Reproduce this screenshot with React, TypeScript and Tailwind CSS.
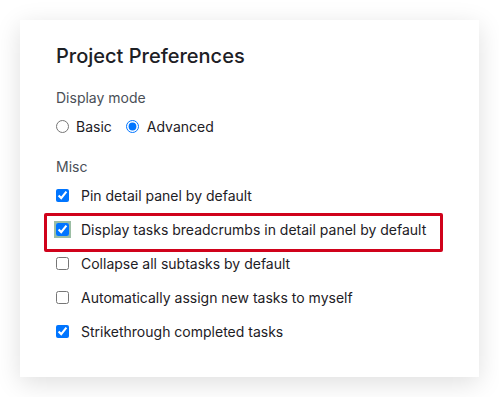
import React from "react";

const items = [
  { label: "Pin detail panel by default", checked: true },
  { label: "Display tasks breadcrumbs in detail panel by default", checked: true, highlight: true },
  { label: "Collapse all subtasks by default", checked: false },
  { label: "Automatically assign new tasks to myself", checked: false },
  { label: "Strikethrough completed tasks", checked: true },
];

export default function App() {
  return (
    <div className="w-[499px] h-[397px] bg-white pt-[20px] pl-[20px]" style={{ fontFamily: "Inter, 'Noto Sans', sans-serif" }}>
      <div className="w-[459px] h-[357px] bg-white shadow-[0_6px_24px_rgba(0,0,0,0.13)] pl-[36px] pt-[22px]">
        <h1 className="text-[20px] leading-[28px] font-medium text-[#1d2025]">Project Preferences</h1>
        <div className="mt-[18px] text-[14px] leading-[20px] text-[#4a4f57]">Display mode</div>
        <div className="mt-[8px] flex items-center h-[20px] text-[14px] text-[#1d2025]">
          <input type="radio" name="mode" className="m-0 w-[13px] h-[13px]" />
          <span className="ml-[7px]">Basic</span>
          <input type="radio" name="mode" defaultChecked className="m-0 ml-[14px] w-[13px] h-[13px]" />
          <span className="ml-[8px]">Advanced</span>
        </div>
        <div className="mt-[21px] text-[14px] leading-[20px] text-[#4a4f57]">Misc</div>
        <div className="mt-[8px] flex flex-col gap-[14px]">
          {items.map((it) =>
            it.highlight ? (
              <div key={it.label} className="relative flex items-center h-[20px] text-[14px] text-[#1d2025]">
                <div className="absolute left-[-12px] top-[-6px] w-[399px] h-[39px] border-[3px] border-[#d0021b] rounded-[2px]" />
                <span className="flex items-center justify-center w-[17px] h-[17px] -ml-[2px] -mr-[2px] bg-[#9cbea4]">
                  <input type="checkbox" defaultChecked={it.checked} className="m-0 w-[13px] h-[13px]" />
                </span>
                <span className="ml-[12px]">{it.label}</span>
              </div>
            ) : (
              <div key={it.label} className="flex items-center h-[20px] text-[14px] text-[#1d2025]">
                <input type="checkbox" defaultChecked={it.checked} className="m-0 w-[13px] h-[13px]" />
                <span className="ml-[12px]">{it.label}</span>
              </div>
            )
          )}
        </div>
      </div>
    </div>
  );
}
